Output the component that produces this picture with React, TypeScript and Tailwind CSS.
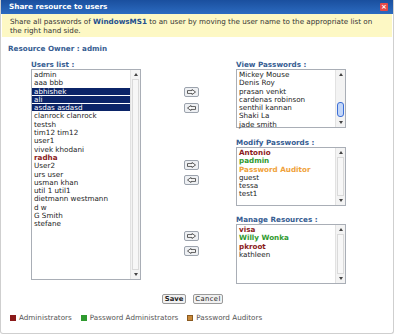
type Tone = "admin" | "padmin" | "auditor";
type Item = { name: string; tone?: Tone; selected?: boolean };

const TONE_CLASS: Record<Tone, string> = {
  admin: "font-bold text-[#8b1a1a]",
  padmin: "font-bold text-[#2f9a2f]",
  auditor: "font-bold text-[#f0a23a]",
};

const USERS: Item[] = [
  { name: "admin" },
  { name: "aaa bbb" },
  { name: "abhishek", selected: true },
  { name: "ali", selected: true },
  { name: "asdas asdasd", selected: true },
  { name: "clanrock clanrock" },
  { name: "testsh" },
  { name: "tim12 tim12" },
  { name: "user1" },
  { name: "vivek khodani" },
  { name: "radha", tone: "admin" },
  { name: "User2" },
  { name: "urs user" },
  { name: "usman khan" },
  { name: "util 1 util1" },
  { name: "dietmann westmann" },
  { name: "d w" },
  { name: "G Smith" },
  { name: "stefane" },
];

const VIEW: Item[] = [
  { name: "Mickey Mouse" },
  { name: "Denis Roy" },
  { name: "prasan venkt" },
  { name: "cardenas robinson" },
  { name: "senthil kannan" },
  { name: "Shaki La" },
  { name: "jade smith" },
];

const MODIFY: Item[] = [
  { name: "Antonio", tone: "admin" },
  { name: "padmin", tone: "padmin" },
  { name: "Password Auditor", tone: "auditor" },
  { name: "guest" },
  { name: "tessa" },
  { name: "test1" },
];

const MANAGE: Item[] = [
  { name: "visa", tone: "admin" },
  { name: "Willy Wonka", tone: "padmin" },
  { name: "pkroot", tone: "admin" },
  { name: "kathleen" },
];

function ScrollBar({ blue }: { blue?: boolean }) {
  return (
    <div className="flex w-[10px] flex-col border-l border-[#e2e2e2] bg-[#f3f3f3]">
      <div className="flex h-[9px] items-center justify-center">
        <span className="border-x-[2px] border-b-[3px] border-x-transparent border-b-[#444]" />
      </div>
      {blue ? (
        <div className="flex flex-1 flex-col justify-end pb-[1px]">
          <div className="mx-[1px] h-[15px] rounded-[3px] border border-[#3d6fd6] bg-[#c3d7f9]" />
        </div>
      ) : (
        <div className="mx-[1px] flex-1 border border-[#dadada] bg-[#f7f7f7]" />
      )}
      <div className="flex h-[9px] items-center justify-center">
        <span className="border-x-[2px] border-t-[3px] border-x-transparent border-t-[#444]" />
      </div>
    </div>
  );
}

function ListBox({ items, className, blue }: { items: Item[]; className: string; blue?: boolean }) {
  return (
    <div className={`flex border border-[#a9aeb6] bg-white ${className}`}>
      <div className="flex-1 pt-[1px]">
        {items.map((it) => (
          <div
            key={it.name}
            className={`h-[8.3px] whitespace-nowrap pl-[2px] leading-[8.3px] ${
              it.selected ? "border-b border-white bg-[#0b2468] text-white" : it.tone ? TONE_CLASS[it.tone] : "text-[#222]"
            }`}
          >
            {it.name}
          </div>
        ))}
      </div>
      <ScrollBar blue={blue} />
    </div>
  );
}

function ArrowBtn({ dir }: { dir: "r" | "l" }) {
  const d = dir === "r" ? "M0.5 1.6H5V0.5L8.5 3L5 5.5V4.4H0.5Z" : "M8.5 1.6H4V0.5L0.5 3L4 5.5V4.4H8.5Z";
  return (
    <button className="flex h-[10px] w-[15px] items-center justify-center rounded-[2px] border border-[#9ca3ad] bg-[#eef0f3]">
      <svg width="9" height="6" viewBox="0 0 9 6">
        <path d={d} fill="#fff" stroke="#333" strokeWidth="0.8" strokeLinejoin="round" />
      </svg>
    </button>
  );
}

function Label({ children }: { children: string }) {
  return <div className="h-[9px] whitespace-nowrap text-[7.2px] font-bold leading-[9px] text-[#365d92]">{children}</div>;
}

export default function App() {
  return (
    <div className="h-[336px] w-[395px] bg-white text-[7.2px] text-[#222]" style={{ fontFamily: '"DejaVu Sans", Verdana, sans-serif' }}>
      <div className="h-[334px] w-[394px] rounded-b-[3px] border-x border-b border-[#cfcfcf]">
        {/* title bar */}
        <div className="flex h-[14px] items-center justify-between bg-gradient-to-b from-[#1a4f9e] to-[#2c6bc0] pl-[8px] pr-[5px]">
          <span className="text-[7.3px] font-bold text-white">Share resource to users</span>
          <span className="flex h-[8px] w-[8px] items-center justify-center rounded-[1px] bg-[#e54848] text-[7px] font-bold leading-none text-white">
            ×
          </span>
        </div>

        {/* info */}
        <div className="mx-[1px] h-[23px] bg-[#fdf8c4] px-[8px] pt-[3px] leading-[9px] text-[#333]">
          Share all passwords of <span className="font-bold text-[#24508e]">WindowsMS1</span> to an user by moving the user name to the appropriate list on the right hand side.
        </div>

        <div className="mt-[7px] pl-[7px]">
          <Label>Resource Owner : admin</Label>
        </div>

        {/* lists */}
        <div className="mt-[7px] flex">
          <div className="ml-[30px] w-[110px]">
            <Label>Users list :</Label>
            <ListBox items={USERS} className="h-[211px]" />
          </div>

          <div className="flex flex-col">
            <div className="flex">
              <div className="ml-[43px] flex w-[15px] flex-col gap-[6px] pt-[27px]">
                <ArrowBtn dir="r" />
                <ArrowBtn dir="l" />
              </div>
              <div className="ml-[37px] w-[110px]">
                <Label>View Passwords :</Label>
                <ListBox items={VIEW} className="h-[59px]" blue />
              </div>
            </div>

            <div className="mt-[10px] flex">
              <div className="ml-[43px] flex w-[15px] flex-col gap-[5px] pt-[22px]">
                <ArrowBtn dir="r" />
                <ArrowBtn dir="l" />
              </div>
              <div className="ml-[37px] w-[110px]">
                <Label>Modify Passwords :</Label>
                <ListBox items={MODIFY} className="h-[59px]" />
              </div>
            </div>

            <div className="mt-[9px] flex">
              <div className="ml-[43px] flex w-[15px] flex-col gap-[5px] pt-[16px]">
                <ArrowBtn dir="r" />
                <ArrowBtn dir="l" />
              </div>
              <div className="ml-[37px] w-[110px]">
                <Label>Manage Resources :</Label>
                <ListBox items={MANAGE} className="h-[60px]" />
              </div>
            </div>
          </div>
        </div>

        {/* buttons */}
        <div className="mt-[10px] flex gap-[7px] pl-[161px]">
          <button className="h-[10px] w-[24px] rounded-[2px] border border-[#9a9a9a] bg-[#f1f1f1] text-[6.8px] font-bold leading-[8px] text-[#222]">
            Save
          </button>
          <button className="h-[10px] w-[30px] rounded-[2px] border border-[#9a9a9a] bg-[#f1f1f1] text-[6.8px] leading-[8px] tracking-[0.4px] text-[#222]">
            Cancel
          </button>
        </div>

        {/* legend */}
        <div className="mt-[9px] flex h-[9px] items-center pl-[9px] leading-[9px] text-[#555]">
          <span className="h-[6px] w-[6px] bg-[#8b1a1a]" />
          <span className="ml-[3px]">Administrators</span>
          <span className="ml-[9px] h-[6px] w-[6px] bg-[#2f9a2f]" />
          <span className="ml-[3px]">Password Administrators</span>
          <span className="ml-[9px] h-[6px] w-[6px] border border-[#8a5a20] bg-[#c98a3a]" />
          <span className="ml-[3px]">Password Auditors</span>
        </div>
      </div>
    </div>
  );
}
